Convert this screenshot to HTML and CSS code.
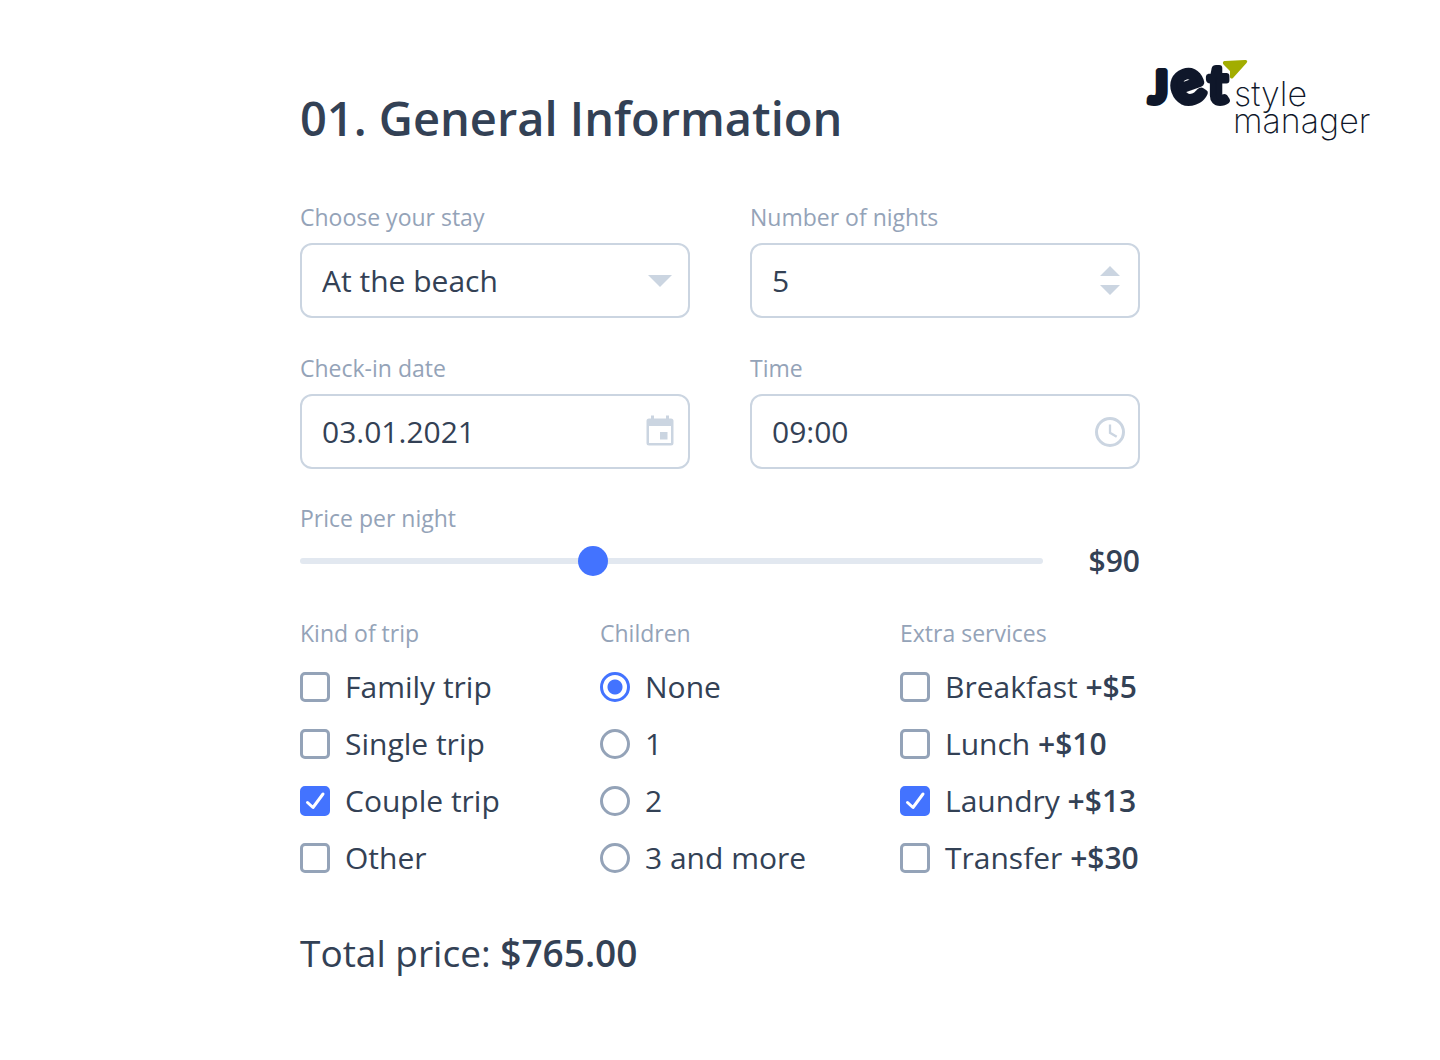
FILE: index.html
```html
<!DOCTYPE html>
<html lang="en">
<head>
    <meta charset="UTF-8">
    <meta name="viewport" content="width=device-width, initial-scale=1.0">
    <title>General Information</title>
    <link rel="stylesheet" href="styles.css">
</head>
<body>
    <div class="page">
        <form class="form">
            <h1>01. General Information</h1>

            <div class="fields">
                <div class="field">
                    <label for="stay">Choose your stay</label>
                    <div class="control">
                        <select id="stay">
                            <option>At the beach</option>
                            <option>In the mountains</option>
                            <option>In the city</option>
                        </select>
                        <svg class="icon" viewBox="0 0 30 30" aria-hidden="true">
                            <path d="M3 9h24L15 21z"/>
                        </svg>
                    </div>
                </div>
                <div class="field">
                    <label for="nights">Number of nights</label>
                    <div class="control">
                        <input type="number" id="nights" min="1" value="5">
                        <svg class="icon" viewBox="0 0 30 30" aria-hidden="true">
                            <path d="M5 10L15 0l10 10zM5 19h20L15 29z"/>
                        </svg>
                    </div>
                </div>
                <div class="field">
                    <label for="date">Check-in date</label>
                    <div class="control">
                        <input type="text" id="date" value="03.01.2021">
                        <svg class="icon" viewBox="0 0 30 30" aria-hidden="true">
                            <path fill-rule="evenodd" d="M6 -1.500h3v3h12v-3h3v3h2a2.500 2.500 0 0 1 2.500 2.500v22a2.500 2.500 0 0 1-2.500 2.500H4a2.500 2.500 0 0 1-2.500-2.500V4A2.500 2.500 0 0 1 4 1.500h2zM4 9v17h22V9z"/>
                            <path d="M15 15h7.500v7.500H15z"/>
                        </svg>
                    </div>
                </div>
                <div class="field">
                    <label for="time">Time</label>
                    <div class="control">
                        <input type="text" id="time" value="09:00">
                        <svg class="icon icon-line" viewBox="0 0 30 30" aria-hidden="true">
                            <circle cx="15" cy="15" r="13.500" stroke-width="3"/>
                            <path d="M15 7.500v8.300l6.700 4" stroke-width="2.300"/>
                        </svg>
                    </div>
                </div>
            </div>

            <div class="price">
                <label for="price">Price per night</label>
                <div class="price-row">
                    <input type="range" id="price" min="12" max="212" value="90">
                    <output for="price">$90</output>
                </div>
            </div>

            <div class="options">
                <fieldset>
                    <legend>Kind of trip</legend>
                    <label><input type="checkbox" name="trip"> Family trip</label>
                    <label><input type="checkbox" name="trip"> Single trip</label>
                    <label><input type="checkbox" name="trip" checked> Couple trip</label>
                    <label><input type="checkbox" name="trip"> Other</label>
                </fieldset>
                <fieldset>
                    <legend>Children</legend>
                    <label><input type="radio" name="children" checked> None</label>
                    <label><input type="radio" name="children"> 1</label>
                    <label><input type="radio" name="children"> 2</label>
                    <label><input type="radio" name="children"> 3 and more</label>
                </fieldset>
                <fieldset>
                    <legend>Extra services</legend>
                    <label><input type="checkbox" name="extra"><span>Breakfast <b>+$5</b></span></label>
                    <label><input type="checkbox" name="extra"><span>Lunch <b>+$10</b></span></label>
                    <label><input type="checkbox" name="extra" checked><span>Laundry <b>+$13</b></span></label>
                    <label><input type="checkbox" name="extra"><span>Transfer <b>+$30</b></span></label>
                </fieldset>
            </div>

            <p class="total">Total price: <b>$765.00</b></p>
        </form>

        <svg class="logo" viewBox="0 0 234 80" role="img" aria-label="Jet style manager">
            <g class="logo-bold">
                <text x="3" y="43" font-size="44">J</text>
                <text x="26" y="43" font-size="61" transform="rotate(-20 42 28)">e</text>
                <text x="62" y="43" font-size="52">t</text>
            </g>
            <path class="logo-leaf" d="M79 1L99 0c2 0 3 1 1.500 3L87 18c-1 1-3 .5-3-1v-6l-6-6c-2-2-1-4 1-4z"/>
            <g class="logo-light">
                <text x="88" y="46">style</text>
                <text x="87" y="73">manager</text>
            </g>
        </svg>
    </div>
</body>
</html>
```

FILE: styles.css
```css
body {
    margin: 0;
    font-family: "Trebuchet MS", "Open Sans", sans-serif;
    font-size: 30px;
    line-height: 36px;
    color: #334155;
    background-color: #fff;
}

.page {
    display: grid;
    grid-template-columns: 1fr minmax(0, 840px) 1fr;
    padding: 60px;
}

.form {
    grid-column: 2;
}

h1 {
    margin: 28px 0 55px;
    font-size: 47px;
    font-weight: 600;
    line-height: 60px;
}

b {
    font-weight: 600;
}

.fields {
    display: grid;
    grid-template-columns: 1fr 1fr;
    gap: 36px 60px;
}

.field {
    display: flex;
    flex-direction: column;
    gap: 12px;
}

.field label,
.price label,
legend {
    padding: 0;
    font-size: 23px;
    line-height: 28px;
    color: #94a3b8;
}

.control {
    position: relative;
}

.control input,
.control select {
    display: block;
    box-sizing: border-box;
    width: 100%;
    height: 75px;
    padding: 0 60px 0 20px;
    border: 2px solid #cbd5e1;
    border-radius: 12px;
    background-color: #fff;
    color: inherit;
    font: inherit;
    appearance: none;
}

.control input[type="number"] {
    appearance: textfield;
}

.icon {
    position: absolute;
    top: 23px;
    right: 15px;
    width: 30px;
    height: 30px;
    overflow: visible;
    fill: #cbd5e1;
    pointer-events: none;
}

.icon-line {
    fill: none;
    stroke: #cbd5e1;
}

.price {
    margin-top: 35px;
}

.price label {
    display: block;
}

.price-row {
    display: flex;
    align-items: center;
    gap: 46px;
    margin-top: 11px;
}

.price-row output {
    font-weight: 600;
}

input[type="range"] {
    flex: 1;
    min-width: 0;
    height: 30px;
    margin: 0;
    background: none;
    appearance: none;
}

input[type="range"]::-webkit-slider-runnable-track {
    height: 6px;
    border-radius: 3px;
    background-color: #e2e8f0;
}

input[type="range"]::-webkit-slider-thumb {
    width: 30px;
    height: 30px;
    margin-top: -12px;
    border-radius: 50%;
    background-color: #4373ff;
    appearance: none;
}

.options {
    display: grid;
    grid-template-columns: 5fr 5fr 4fr;
    margin-top: 40px;
}

fieldset {
    min-width: 0;
    margin: 0;
    padding: 0;
    border: 0;
}

legend {
    margin-bottom: 22px;
}

fieldset label {
    display: flex;
    align-items: center;
    gap: 15px;
    margin-bottom: 21px;
    white-space: nowrap;
}

input[type="checkbox"],
input[type="radio"] {
    flex: none;
    box-sizing: border-box;
    width: 30px;
    height: 30px;
    margin: 0;
    border: 3px solid #94a3b8;
    border-radius: 5px;
    appearance: none;
}

input[type="radio"] {
    border-radius: 50%;
}

input[type="checkbox"]:checked {
    border-color: #4373ff;
    background: #4373ff url("data:image/svg+xml,%3Csvg xmlns='http://www.w3.org/2000/svg' viewBox='0 0 24 24'%3E%3Cpath d='M4.500 13.500l5.500 5L20 5' fill='none' stroke='white' stroke-width='3' stroke-linecap='round' stroke-linejoin='round'/%3E%3C/svg%3E") center / 24px no-repeat;
}

input[type="radio"]:checked {
    border-color: #4373ff;
    background: radial-gradient(circle, #4373ff 7px, transparent 8px);
}

.total {
    margin: 34px 0 0;
    font-size: 37px;
    line-height: 44px;
}

.logo {
    grid-column: 3;
    justify-self: end;
    width: 234px;
    height: 80px;
    overflow: visible;
    fill: #0f172a;
}

.logo-bold {
    font-family: Lato, sans-serif;
    font-weight: 700;
    stroke: #0f172a;
    stroke-width: 6px;
    stroke-linejoin: round;
}

.logo-light {
    font-family: Inter, sans-serif;
    font-size: 34px;
    font-weight: 200;
}

.logo-leaf {
    fill: #a2ad00;
}
```
